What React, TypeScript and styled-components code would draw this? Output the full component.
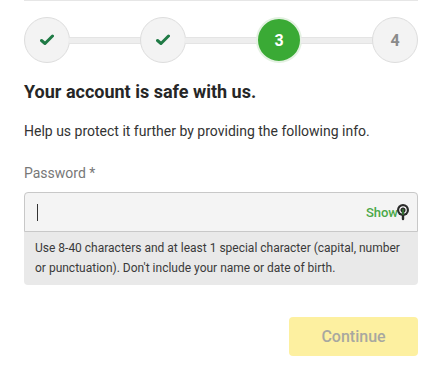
import styled, { createGlobalStyle } from 'styled-components';

const GlobalStyle = createGlobalStyle`
  html, body {
    margin: 0;
    padding: 0;
    background: #ffffff;
  }
  * {
    box-sizing: border-box;
  }
`;

const steps = [
  { label: '1', state: 'done' },
  { label: '2', state: 'done' },
  { label: '3', state: 'active' },
  { label: '4', state: 'todo' },
] as const;

type StepState = 'done' | 'active' | 'todo';

export default function App() {
  return (
    <>
      <GlobalStyle />
      <Wrapper>
        <TopRule />
        <Stepper>
          {steps.map((step, index) => (
            <StepGroup key={step.label} $last={index === steps.length - 1}>
              <Circle $state={step.state}>
                {step.state === 'done' ? (
                  <svg width="14" height="12" viewBox="0 0 14 12">
                    <path d="M1.5 6.5 L5 9.5 L12.5 2" fill="none" stroke="#1f7a45" strokeWidth="3" strokeLinecap="round" strokeLinejoin="round" />
                  </svg>
                ) : (
                  step.label
                )}
              </Circle>
              {index < steps.length - 1 && <Connector />}
            </StepGroup>
          ))}
        </Stepper>

        <Title>Your account is safe with us.</Title>
        <Lead>Help us protect it further by providing the following info.</Lead>

        <Label>Password *</Label>
        <Field>
          <InputRow>
            <Caret />
            <ShowToggle>
              Show
              <Pointer>
                <svg width="14" height="18" viewBox="0 0 14 18">
                  <circle cx="7" cy="7" r="6" fill="#2b2b2b" />
                  <circle cx="7" cy="7" r="3.2" fill="none" stroke="#ffffff" strokeWidth="1.2" />
                  <path d="M7 6 L7 16" stroke="#2b2b2b" strokeWidth="2.4" strokeLinecap="round" />
                  <path d="M7 6 L7 12" stroke="#3aaa35" strokeWidth="1" />
                </svg>
              </Pointer>
            </ShowToggle>
          </InputRow>
          <Hint>
            Use 8-40 characters and at least 1 special character (capital, number or punctuation). Don't include your name or date of birth.
          </Hint>
        </Field>

        <Actions>
          <ContinueButton disabled>Continue</ContinueButton>
        </Actions>
      </Wrapper>
    </>
  );
}

const Wrapper = styled.div`
  width: 441px;
  height: 382px;
  padding: 0 23px 0 24px;
  font-family: Roboto, 'Liberation Sans', Arial, sans-serif;
  color: #333;
  overflow: hidden;
`;

const TopRule = styled.div`
  height: 1px;
  background: #e6e6e6;
`;

const Stepper = styled.div`
  display: flex;
  align-items: center;
  margin-top: 16px;
`;

const StepGroup = styled.div<{ $last: boolean }>`
  display: flex;
  align-items: center;
  flex: ${({ $last }) => ($last ? '0 0 auto' : '1 1 0')};
`;

const Circle = styled.div<{ $state: StepState }>`
  display: flex;
  justify-content: center;
  align-items: center;
  width: 46px;
  height: 46px;
  border-radius: 50%;
  flex-shrink: 0;
  font-size: 16px;
  font-weight: 700;
  background: ${({ $state }) => ($state === 'active' ? '#3aaa35' : '#f3f3f3')};
  color: ${({ $state }) => ($state === 'active' ? '#ffffff' : '#8a8a8a')};
  border: ${({ $state }) => ($state === 'active' ? '2px solid #e3f1e1' : '1px solid #dddddd')};
`;

const Connector = styled.div`
  flex: 1;
  height: 7px;
  background: #eeeeee;
  border-top: 1px solid #e4e4e4;
  border-bottom: 1px solid #e4e4e4;
  margin: 0 -1px;
`;

const Title = styled.h1`
  margin: 18px 0 0;
  font-size: 18px;
  font-weight: 700;
  line-height: 22px;
  color: #262626;
`;

const Lead = styled.p`
  margin: 18px 0 0;
  font-size: 14px;
  line-height: 20px;
  color: #333;
`;

const Label = styled.div`
  margin-top: 22px;
  font-size: 14px;
  line-height: 20px;
  color: #777;
`;

const Field = styled.div`
  margin-top: 9px;
  border-radius: 4px;
  overflow: hidden;
  background: #e9e9e9;
`;

const InputRow = styled.div`
  display: flex;
  align-items: center;
  justify-content: space-between;
  height: 40px;
  padding: 0 12px;
  background: #f4f4f4;
  border: 1px solid #c8c8c8;
  border-radius: 4px 4px 0 0;
`;

const Caret = styled.span`
  display: block;
  width: 1px;
  height: 17px;
  background: #333;
`;

const ShowToggle = styled.span`
  position: relative;
  font-size: 13px;
  font-weight: 500;
  color: #4aa848;
  padding-right: 7px;
`;

const Pointer = styled.span`
  position: absolute;
  right: -5px;
  top: -2px;
  line-height: 0;
`;

const Hint = styled.p`
  margin: 0;
  padding: 6px 11px 7px;
  font-size: 12px;
  line-height: 20px;
  color: #3a3a3a;
`;

const Actions = styled.div`
  display: flex;
  justify-content: flex-end;
  margin-top: 32px;
`;

const ContinueButton = styled.button`
  width: 129px;
  height: 39px;
  border: none;
  border-radius: 4px;
  background: #fdf0a0;
  color: #a8a8a0;
  font-family: Roboto, 'Liberation Sans', Arial, sans-serif;
  font-size: 16px;
  font-weight: 500;
`;
